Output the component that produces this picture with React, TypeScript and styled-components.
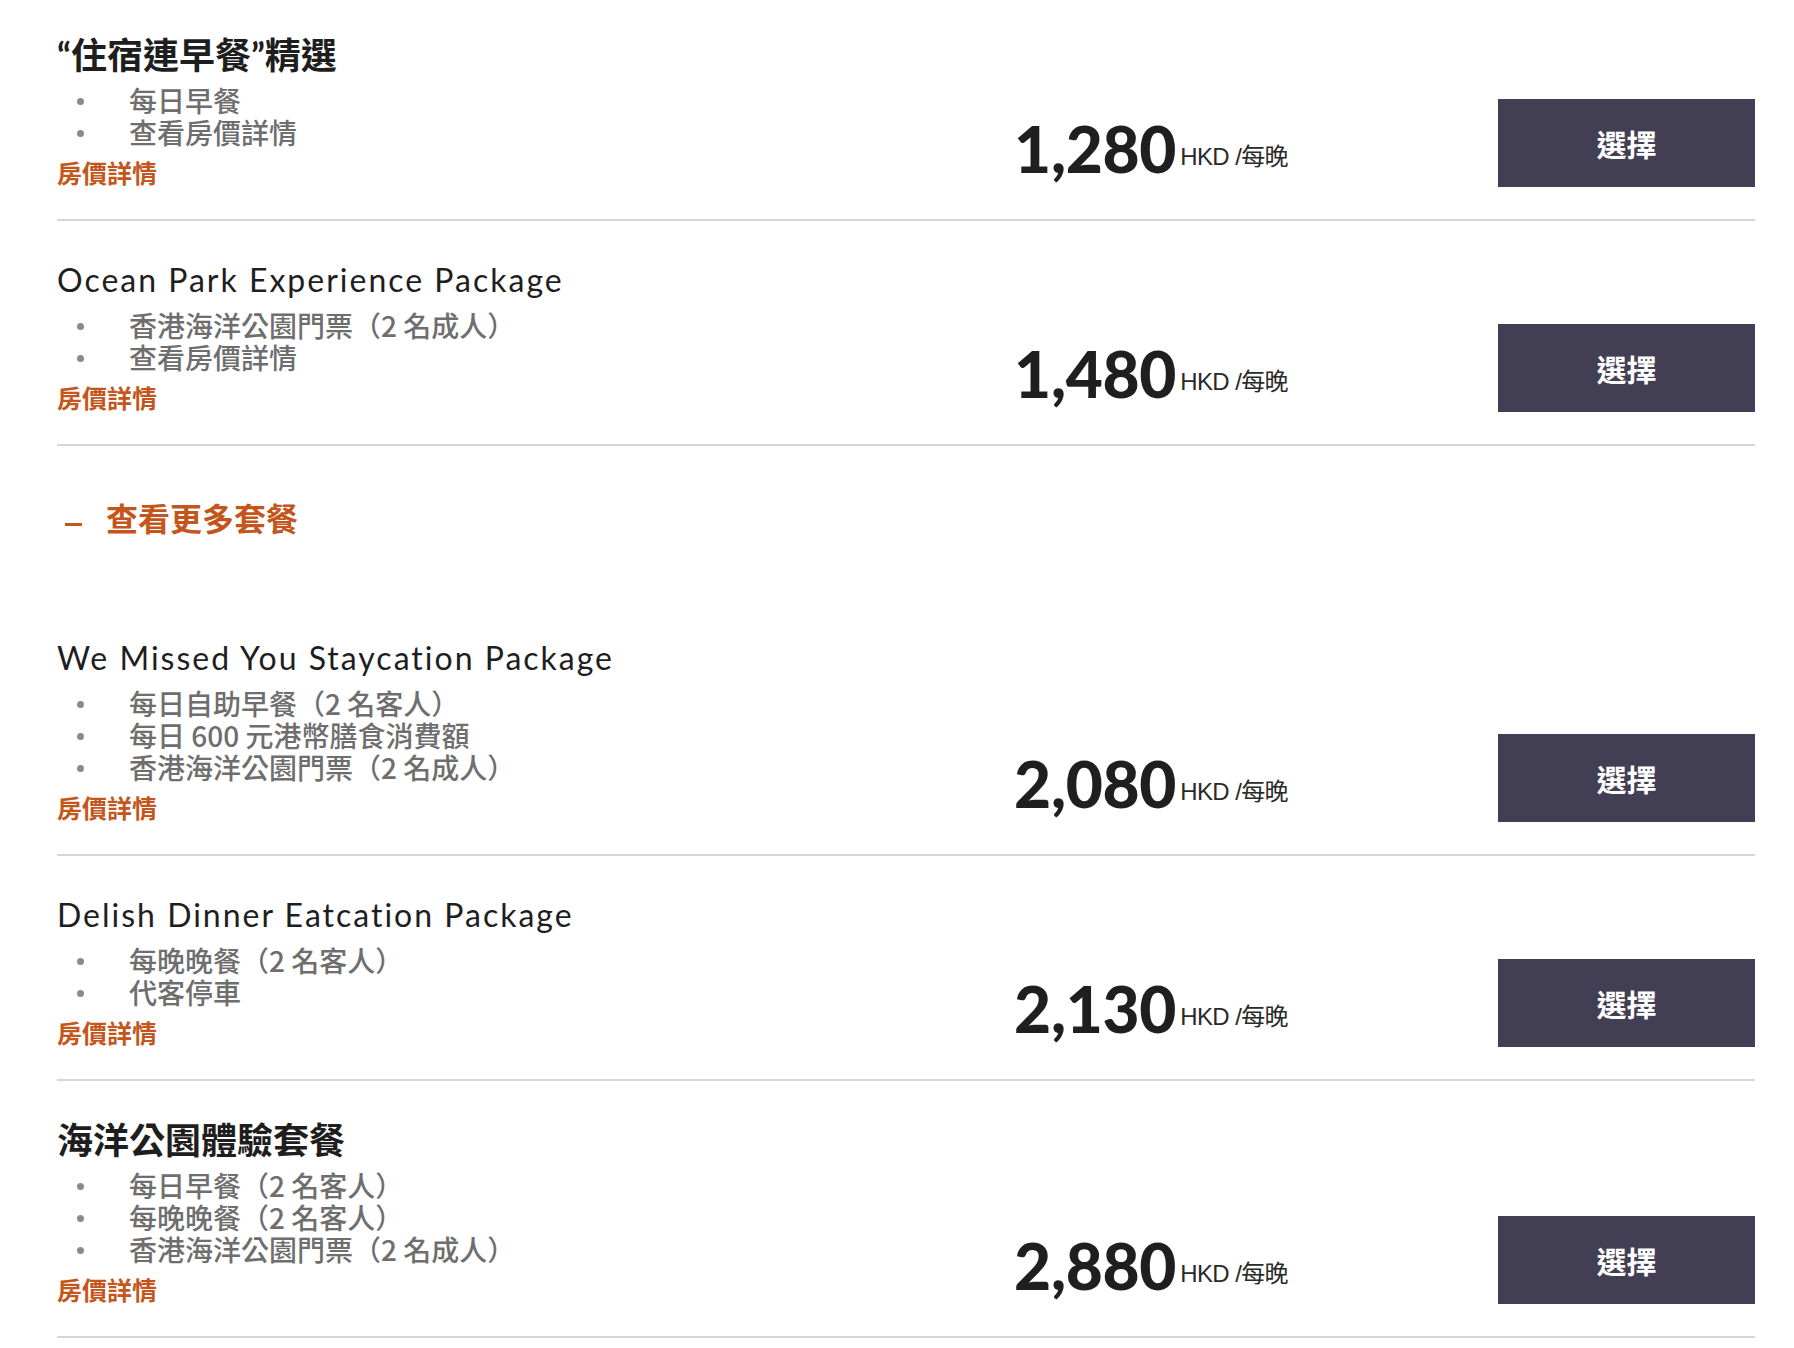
import React from 'react';
import styled, { createGlobalStyle } from 'styled-components';

const GlobalStyle = createGlobalStyle`
  html, body {
    margin: 0;
    padding: 0;
    background: #ffffff;
  }
  body {
    font-family: "Lato", "Noto Sans CJK TC", sans-serif;
  }
`;

const CJK = '"Noto Sans CJK TC", "Noto Sans CJK SC", sans-serif';

const Page = styled.div`
  width: 1794px;
  padding: 0 39px 0 57px;
  box-sizing: border-box;
`;

const Row = styled.div`
  display: grid;
  grid-template-columns: 1fr auto 257px;
  column-gap: 210px;
  align-items: end;
  padding: 39px 0 32px;
  border-bottom: 2px solid #d6d6d6;

  &:first-child {
    padding-top: 35px;
  }
`;

const Details = styled.div`
  display: flex;
  flex-direction: column;
`;

const Title = styled.h3<{ $latin?: boolean }>`
  margin: 0;
  height: 40px;
  line-height: 40px;
  color: #1e1e1e;
  font-family: "Lato", ${CJK};
  font-size: ${({ $latin }): string => ($latin ? '32px' : '36px')};
  font-weight: ${({ $latin }): number => ($latin ? 400 : 700)};
  letter-spacing: ${({ $latin }): string => ($latin ? '2px' : '0')};
  white-space: nowrap;
`;

const Perks = styled.ul`
  list-style: none;
  margin: 9px 0 0;
  padding: 0;
`;

const Perk = styled.li`
  display: flex;
  align-items: center;
  height: 32px;
  line-height: 32px;
  font-family: ${CJK};
  font-size: 28px;
  font-weight: 500;
  color: #6e6e6e;
  white-space: pre;

  &::before {
    content: '';
    width: 7px;
    height: 7px;
    border-radius: 50%;
    background: #8a8a8a;
    margin: 2px 45px 0 20px;
    flex-shrink: 0;
  }
`;

const RateLink = styled.a`
  display: block;
  margin-top: 9px;
  height: 30px;
  line-height: 30px;
  font-family: ${CJK};
  font-size: 25px;
  font-weight: 700;
  color: #c4561c;
  cursor: pointer;
`;

const Price = styled.div`
  text-align: right;
  white-space: nowrap;
  line-height: 1;
  margin-bottom: 6px;
`;

const Amount = styled.span`
  font-family: "Lato", sans-serif;
  font-size: 64px;
  font-weight: 900;
  letter-spacing: -0.3px;
  color: #1f1f1f;
`;

const Unit = styled.span`
  margin-left: 4px;
  vertical-align: 8px;
  font-family: "Liberation Sans", ${CJK};
  font-size: 24px;
  color: #2a2a2a;
  letter-spacing: -0.6px;
`;

const SelectButton = styled.button`
  width: 257px;
  height: 88px;
  border: none;
  background: #423e54;
  color: #ffffff;
  font-family: ${CJK};
  font-size: 30px;
  font-weight: 700;
  cursor: pointer;
`;

const MoreToggle = styled.div`
  display: flex;
  align-items: center;
  height: 40px;
  margin: 51px 0 66px;
  color: #c4561c;
  font-family: ${CJK};
  font-size: 32px;
  font-weight: 700;
`;

const Dash = styled.span`
  display: inline-block;
  width: 17px;
  height: 3px;
  background: #c4561c;
  margin: 14px 24px 0 8px;
`;

interface Offer {
  title: string;
  latin?: boolean;
  perks: string[];
  price: string;
}

const topOffers: Offer[] = [
  { title: '“住宿連早餐”精選', perks: ['每日早餐', '查看房價詳情'], price: '1,280' },
  { title: 'Ocean Park Experience Package', latin: true, perks: ['香港海洋公園門票（2 名成人）', '查看房價詳情'], price: '1,480' },
];

const moreOffers: Offer[] = [
  {
    title: 'We Missed You Staycation Package',
    latin: true,
    perks: ['每日自助早餐（2 名客人）', '每日 600 元港幣膳食消費額', '香港海洋公園門票（2 名成人）'],
    price: '2,080',
  },
  { title: 'Delish Dinner Eatcation Package', latin: true, perks: ['每晚晚餐（2 名客人）', '代客停車'], price: '2,130' },
  {
    title: '海洋公園體驗套餐',
    perks: ['每日早餐（2 名客人）', '每晚晚餐（2 名客人）', '香港海洋公園門票（2 名成人）'],
    price: '2,880',
  },
];

const OfferRow: React.FC<{ offer: Offer }> = ({ offer }) => (
  <Row>
    <Details>
      <Title $latin={offer.latin}>{offer.title}</Title>
      <Perks>
        {offer.perks.map((perk, index) => <Perk key={index}>{perk}</Perk>)}
      </Perks>
      <RateLink>房價詳情</RateLink>
    </Details>
    <Price>
      <Amount>{offer.price}</Amount>
      <Unit>HKD /每晚</Unit>
    </Price>
    <SelectButton>選擇</SelectButton>
  </Row>
);

const App: React.FC = () => (
  <>
    <GlobalStyle />
    <Page>
      <div>
        {topOffers.map((offer) => <OfferRow key={offer.price} offer={offer} />)}
      </div>
      <MoreToggle>
        <Dash />
        查看更多套餐
      </MoreToggle>
      <div>
        {moreOffers.map((offer) => <OfferRow key={offer.price} offer={offer} />)}
      </div>
    </Page>
  </>
);

export default App;
